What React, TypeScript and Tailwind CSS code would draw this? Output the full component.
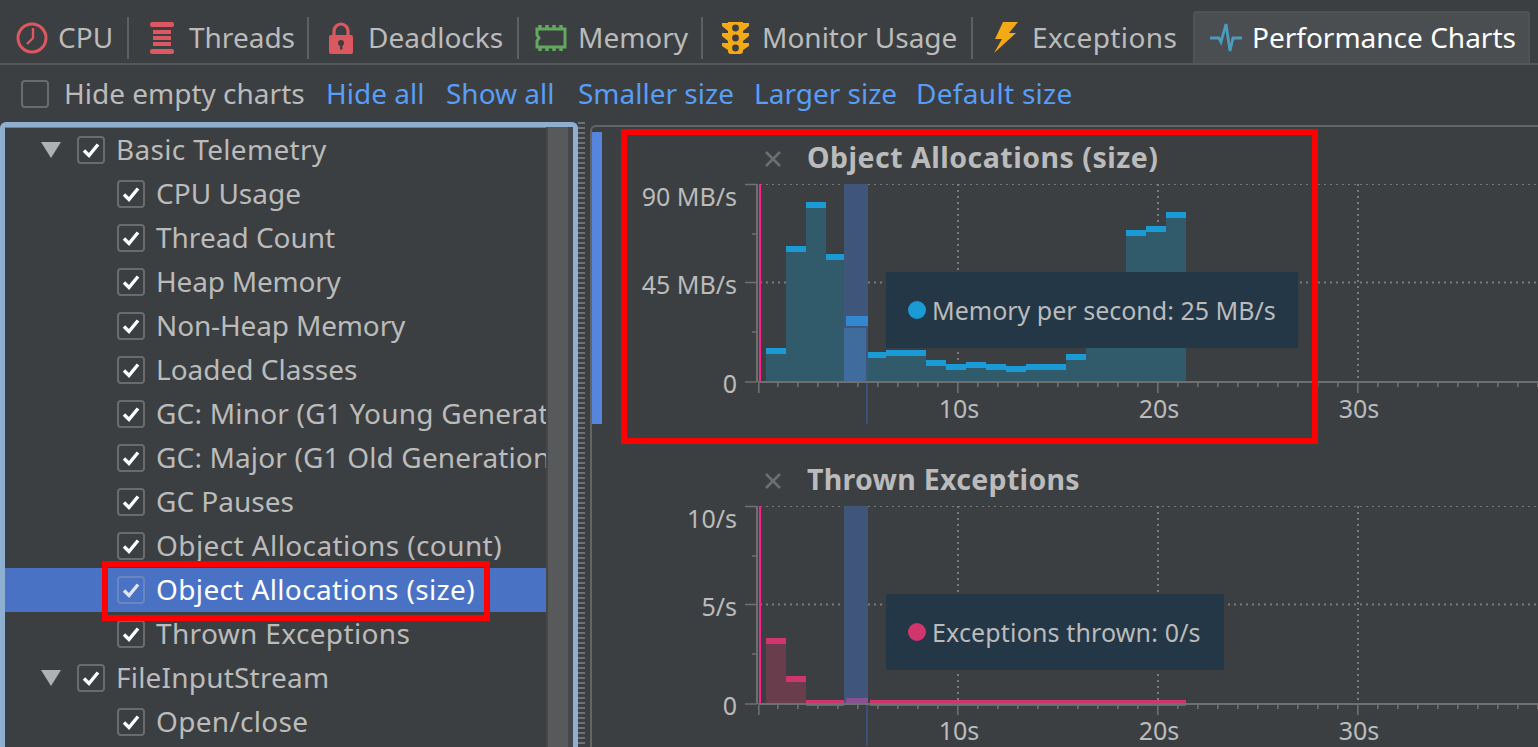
const FONT = "font-['Noto_Sans',sans-serif]";

function Sep() {
  return <div className="w-[2px] h-[42px] bg-[#5e6060] shrink-0" />;
}

const ClockIcon = () => (
  <svg width="32" height="32" viewBox="0 0 32 32" className="shrink-0">
    <circle cx="16" cy="16" r="14" fill="none" stroke="#db5860" strokeWidth="3" />
    <path d="M17 6 V16 L11 22" fill="none" stroke="#db5860" strokeWidth="2.4" />
  </svg>
);
const ThreadsIcon = () => (
  <svg width="24" height="32" viewBox="0 0 24 32" className="shrink-0">
    <rect x="0" y="0" width="24" height="5" rx="2" fill="#db5860" />
    <rect x="3" y="8" width="18" height="4" fill="#db5860" />
    <rect x="3" y="14" width="18" height="4" fill="#db5860" />
    <rect x="3" y="20" width="18" height="4" fill="#db5860" />
    <rect x="0" y="27" width="24" height="5" rx="2" fill="#db5860" />
  </svg>
);
const LockIcon = () => (
  <svg width="24" height="32" viewBox="0 0 24 32" className="shrink-0">
    <path d="M5 14 V9 a7 7 0 0 1 14 0 V14" fill="none" stroke="#db5860" strokeWidth="3.2" />
    <rect x="0" y="13" width="24" height="19" rx="2" fill="#db5860" />
    <circle cx="12" cy="21" r="3" fill="#3c3f41" />
    <rect x="11" y="22" width="2.4" height="5.5" fill="#3c3f41" />
  </svg>
);
const MemoryIcon = () => (
  <svg width="32" height="26" viewBox="0 0 32 26" className="shrink-0">
    <path d="M2 4 H30 V22 H2 V16 L4 13 L2 10 Z" fill="none" stroke="#62a85f" strokeWidth="3" />
    <path d="M5 0 V4 M12 0 V4 M19 0 V4 M26 0 V4 M5 22 V26 M12 22 V26 M19 22 V26 M26 22 V26" stroke="#62a85f" strokeWidth="3.5" />
  </svg>
);
const TrafficIcon = () => (
  <svg width="27" height="32" viewBox="0 0 27 32" className="shrink-0">
    <path d="M0 1 H6 V0 H21 V1 H27 L27 4 L21 9 V11 H27 L27 14 L21 19 V21 H27 L27 24 L21 28 V29 Q21 32 18 32 H9 Q6 32 6 29 V28 L0 24 V21 H6 V19 L0 14 V11 H6 V9 L0 4 Z" fill="#f4a917" />
    <circle cx="13.5" cy="6" r="3.4" fill="#3c3f41" />
    <circle cx="13.5" cy="16" r="3.4" fill="#3c3f41" />
    <circle cx="13.5" cy="26" r="3.4" fill="#3c3f41" />
  </svg>
);
const BoltIcon = () => (
  <svg width="24" height="31" viewBox="0 0 24 31" className="shrink-0">
    <path d="M9 0 H24 L15 11 H22 L0 31 L8 17 H1 Z" fill="#f4a917" />
  </svg>
);
const PerfIcon = () => (
  <svg width="32" height="30" viewBox="0 0 32 30" className="shrink-0">
    <path d="M0 15 H9 L11 19 L16 1 L20 28 L23 15 H32" fill="none" stroke="#4a9bbd" strokeWidth="2.8" />
  </svg>
);

function Check({ muted }: { muted?: boolean }) {
  return (
    <svg width="20" height="20" viewBox="0 0 20 20">
      <path d="M3 10.5 L8 15.5 L17 4.5" fill="none" stroke={muted ? "#dfe4ee" : "#ffffff"} strokeWidth="3.4" />
    </svg>
  );
}

function CheckBox({ checked = true, selected }: { checked?: boolean; selected?: boolean }) {
  return (
    <div
      className={`w-[28px] h-[28px] rounded-[4px] border-2 flex items-center justify-center shrink-0 ${
        selected ? "border-[#6a87bd]" : "border-[#6b6b6b]"
      }`}
    >
      {checked && <Check muted={selected} />}
    </div>
  );
}

function TreeRow({
  label,
  root,
  selected,
  track,
}: {
  label: string;
  root?: boolean;
  selected?: boolean;
  track?: string;
}) {
  return (
    <div
      className={`h-[44px] flex items-center whitespace-nowrap ${root ? "pl-[36px]" : "pl-[112px]"} ${
        selected ? "bg-[#4a72c4] text-white" : "text-[#bbbbbb]"
      }`}
    >
      {root && (
        <svg width="20" height="16" viewBox="0 0 20 16" className="mr-[16px] shrink-0">
          <path d="M0 0 H20 L10 16 Z" fill="#afb1b3" />
        </svg>
      )}
      <CheckBox selected={selected} />
      <span className={`ml-[11px] pb-[2px] ${track ?? ""}`}>{label}</span>
    </div>
  );
}

const rows: { label: string; root?: boolean; selected?: boolean; track?: string }[] = [
  { label: "Basic Telemetry", root: true, track: "tracking-[0.33px]" },
  { label: "CPU Usage" },
  { label: "Thread Count" },
  { label: "Heap Memory", track: "tracking-[-0.2px]" },
  { label: "Non-Heap Memory", track: "tracking-[-0.15px]" },
  { label: "Loaded Classes" },
  { label: "GC: Minor (G1 Young Generation)", track: "tracking-[0.2px]" },
  { label: "GC: Major (G1 Old Generation)", track: "tracking-[0.15px]" },
  { label: "GC Pauses" },
  { label: "Object Allocations (count)", track: "tracking-[0.4px]" },
  { label: "Object Allocations (size)", selected: true, track: "tracking-[0.36px]" },
  { label: "Thrown Exceptions", track: "tracking-[0.36px]" },
  { label: "FileInputStream", root: true, track: "tracking-[0.2px]" },
  { label: "Open/close", track: "tracking-[0.3px]" },
];

type Bar = [number, number, number];

function Chart({
  title,
  titleTrack,
  labels,
  bars,
  capH,
  fill,
  cap,
  tooltip,
  tipW,
  tipTrack,
  dot,
  band,
}: {
  title: string;
  titleTrack: string;
  labels: string[];
  bars: Bar[];
  capH: number;
  fill: string;
  cap: string;
  tooltip: string;
  tipW: string;
  tipTrack: string;
  dot: string;
  band: React.ReactNode;
}) {
  const minor: number[] = [];
  for (let x = 778; x < 1540; x += 20) minor.push(x);
  return (
    <div className="relative h-[322px] shrink-0">
      <div className="h-[51px] flex items-center pl-[172px] pt-[13px]">
        <svg width="18" height="18" viewBox="0 0 18 18" className="mr-[25px] shrink-0">
          <path d="M2 2 L16 16 M16 2 L2 16" stroke="#6e6e6e" strokeWidth="2.6" />
        </svg>
        <span className={`font-bold text-[#bbbbbb] text-[28.5px] pb-[4px] ${titleTrack}`}>{title}</span>
      </div>
      <svg width="946" height="271" viewBox="592 178 946 271" className="block">
        <path d="M760 184.5 H1538" stroke="#767676" strokeWidth="1.2" strokeDasharray="2 4" />
        <path d="M760 282.5 H1538" stroke="#7a7a7a" strokeWidth="2" strokeDasharray="2 4" />
        <path d="M958 184 V382 M1158 184 V382 M1358 184 V382" stroke="#7a7a7a" strokeWidth="2" strokeDasharray="2 4" />
        {bars.map(([x, w, top], i) => (
          <g key={i}>
            <rect x={x} y={top} width={w} height={382 - top} fill={fill} />
            <rect x={x} y={top} width={w} height={capH} fill={cap} />
          </g>
        ))}
        {band}
        <path d="M745 184.5 H757 M745 282.5 H757 M745 382 H757 M752 234 H757 M752 332 H757" stroke="#6f6f6f" strokeWidth="1.6" />
        <rect x="756" y="184" width="2" height="198" fill="#6f6f6f" />
        <rect x="759" y="184" width="2" height="198" fill="#ff1f8f" />
        <rect x="758" y="381" width="780" height="2" fill="#6f6f6f" />
        <rect x="758" y="382" width="1.6" height="11" fill="#6f6f6f" />
        {minor.map((x) => (
          <rect key={x} x={x - 1} y="382" width="1.6" height={(x - 758) % 200 === 0 ? 11 : 5} fill="#6f6f6f" />
        ))}
        <g fill="#bbbbbb" fontSize="25" fontFamily="'Noto Sans', sans-serif">
          <text x="737" y="206" textAnchor="end">{labels[0]}</text>
          <text x="737" y="294" textAnchor="end">{labels[1]}</text>
          <text x="737" y="393" textAnchor="end">{labels[2]}</text>
          <text x="959" y="418" textAnchor="middle">10s</text>
          <text x="1159" y="418" textAnchor="middle">20s</text>
          <text x="1359" y="418" textAnchor="middle">30s</text>
        </g>
      </svg>
      <div
        className={`absolute left-[294px] top-[145px] h-[76px] bg-[#233746] flex items-center pl-[22px] ${tipW}`}
      >
        <span className="w-[18px] h-[18px] rounded-full mr-[6px] shrink-0" style={{ backgroundColor: dot }} />
        <span className={`text-[#bbbbbb] text-[25px] whitespace-nowrap pt-[2px] ${tipTrack}`}>{tooltip}</span>
      </div>
    </div>
  );
}

const allocBars: Bar[] = [
  [766, 20, 348],
  [786, 20, 246],
  [806, 20, 202],
  [826, 20, 254],
  [866, 20, 352],
  [886, 40, 350],
  [926, 20, 360],
  [946, 20, 364],
  [966, 20, 362],
  [986, 20, 364],
  [1006, 20, 366],
  [1026, 40, 364],
  [1066, 20, 354],
  [1086, 40, 300],
  [1126, 20, 230],
  [1146, 20, 226],
  [1166, 20, 212],
];

const thrownBars: Bar[] = [
  [766, 20, 316],
  [786, 20, 354],
  [806, 38, 378],
  [870, 316, 378],
];

export default function App() {
  const tabs = [
    { w: "w-[127px]", pl: "pl-[16px]", gap: "gap-[10px]", icon: <ClockIcon />, label: "CPU" },
    { w: "w-[178px]", pl: "pl-[21px]", gap: "gap-[15px]", icon: <ThreadsIcon />, label: "Threads" },
    { w: "w-[208px]", pl: "pl-[20px]", gap: "gap-[15px]", icon: <LockIcon />, label: "Deadlocks" },
    { w: "w-[182px]", pl: "pl-[16px]", gap: "gap-[11px]", icon: <MemoryIcon />, label: "Memory" },
    { w: "w-[268px]", pl: "pl-[19px]", gap: "gap-[13px]", icon: <TrafficIcon />, label: "Monitor Usage" },
  ];
  return (
    <div className={`w-[1538px] h-[747px] overflow-hidden bg-[#3c3f41] flex flex-col text-[28px] text-[#bbbbbb] ${FONT}`}>
      <div className="h-[65px] shrink-0 flex items-end border-b-2 border-[#555759]">
        <div className="h-[63px] flex items-center flex-1">
          {tabs.map((t) => (
            <div key={t.label} className="flex items-center">
              <div className={`${t.w} ${t.pl} ${t.gap} flex items-center pt-[12px] h-[63px]`}>
                {t.icon}
                <span className="pb-[2px]">{t.label}</span>
              </div>
              <div className="pt-[12px]">
                <Sep />
              </div>
            </div>
          ))}
          <div className="w-[220px] pl-[21px] gap-[14px] flex items-center pt-[12px] h-[63px]">
            <BoltIcon />
            <span className="pb-[2px] tracking-[0.4px]">Exceptions</span>
          </div>
          <div className="w-[337px] h-[52px] self-end rounded-t-[4px] bg-[#4a4e50] border-2 border-b-0 border-[#505355] flex items-center pl-[15px] gap-[10px] text-white">
            <PerfIcon />
            <span className="pb-[2px]">Performance Charts</span>
          </div>
        </div>
      </div>

      <div className="h-[57px] shrink-0 flex items-center pl-[21px] pt-[1px]">
        <CheckBox checked={false} />
        <span className="ml-[15px] w-[262px] shrink-0 pb-[2px]">Hide empty charts</span>
        <div className="flex text-[#589df6] pb-[2px]">
          <span className="w-[120px] shrink-0">Hide all</span>
          <span className="w-[132px] shrink-0">Show all</span>
          <span className="w-[176px] shrink-0">Smaller size</span>
          <span className="w-[162px] shrink-0">Larger size</span>
          <span className="shrink-0 tracking-[0.3px]">Default size</span>
        </div>
      </div>

      <div className="flex flex-1 min-h-0">
        <div className="w-[578px] shrink-0 flex border-l-[5px] border-r-[5px] border-t-[5px] border-[#8fafd1] rounded-tl-[6px] rounded-tr-[6px] overflow-hidden">
          <div className="relative w-[541px] shrink-0 overflow-hidden pt-[1px] shadow-[inset_0_1px_0_#5f7fc9]">
            {rows.map((r) => (
              <TreeRow key={r.label} {...r} />
            ))}
            <div className="absolute left-[97px] top-[434px] w-[388px] h-[60px] border-[6px] border-[#ff0000]" />
          </div>
          <div className="w-[27px] shrink-0 bg-[#45484a] pl-[2px] pr-[5px]">
            <div className="h-full bg-[#57595b]" />
          </div>
        </div>

        <div className="w-[12px] shrink-0 flex justify-start">
          <div className="w-[7px] h-full bg-[repeating-linear-gradient(to_bottom,#6f7071_0,#6f7071_2px,#3c3f41_2px,#3c3f41_5px)]" />
        </div>

        <div className="relative flex-1 mt-[3px] border-l-2 border-t-2 border-[#626466] rounded-tl-[6px] min-w-0 flex">
          <div className="w-[14px] shrink-0 pt-[5px]">
            <div className="w-[10px] h-[292px] bg-[#5585dd]" />
          </div>
          <div className="absolute left-0 top-0 w-[946px] flex flex-col overflow-hidden h-full">
            <Chart
              title="Object Allocations (size)"
              titleTrack="tracking-[0.5px]"
              labels={["90 MB/s", "45 MB/s", "0"]}
              bars={allocBars}
              capH={6}
              fill="#315a6b"
              cap="#1b9bd6"
              tooltip="Memory per second: 25 MB/s"
              tipW="w-[412px]"
              tipTrack=""
              dot="#1b9bd6"
              band={
                <g>
                  <rect x="844" y="184" width="24" height="198" fill="#40557a" />
                  <rect x="844" y="328" width="22" height="54" fill="#3f6c9c" />
                  <rect x="866" y="382" width="2" height="42" fill="#3a4f78" />
                  <rect x="846" y="316" width="22" height="10" fill="#3187d0" />
                </g>
              }
            />
            <Chart
              title="Thrown Exceptions"
              titleTrack="tracking-[0.3px]"
              labels={["10/s", "5/s", "0"]}
              bars={thrownBars}
              capH={6}
              fill="#6a3d4c"
              cap="#d0356e"
              tooltip="Exceptions thrown: 0/s"
              tipW="w-[338px]"
              tipTrack="tracking-[0.15px]"
              dot="#d0356e"
              band={
                <g>
                  <rect x="844" y="184" width="24" height="198" fill="#40557a" />
                  <rect x="846" y="376" width="22" height="6" fill="#8a5192" />
                  <rect x="866" y="382" width="2" height="42" fill="#3a4f78" />
                </g>
              }
            />
            <div className="absolute left-[29px] top-[2px] w-[697px] h-[315px] border-[6px] border-[#ff0000]" />
          </div>
        </div>
      </div>
    </div>
  );
}
